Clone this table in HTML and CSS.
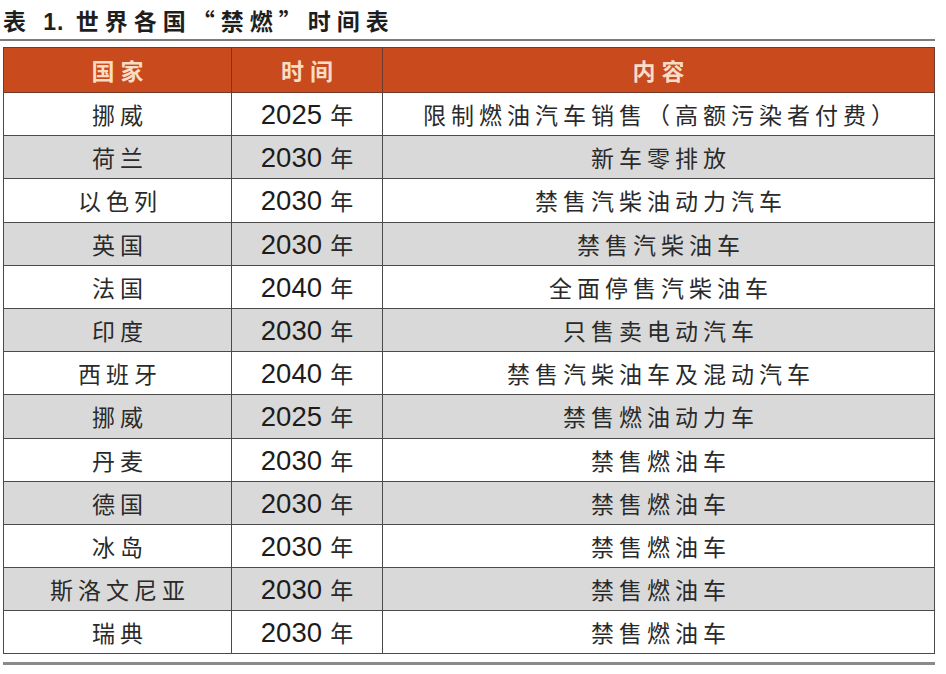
FILE: index.html
```html
<!DOCTYPE html>
<html lang="zh-CN">
<head>
<meta charset="utf-8">
<title>表 1. 世界各国“禁燃”时间表</title>
<link rel="stylesheet" href="styles.css">
</head>
<body>
<div class="page">
  <div class="title">表 <span class="tnum">1.</span> 世界各国“禁燃”时间表</div>
  <table class="ban">
    <colgroup>
      <col class="c1"><col class="c2"><col class="c3">
    </colgroup>
    <thead>
      <tr><th>国家</th><th>时间</th><th>内容</th></tr>
    </thead>
    <tbody>
      <tr><td>挪威</td><td class="yr"><span class="num">2025</span> 年</td><td>限制燃油汽车销售（高额污染者付费）</td></tr>
      <tr><td>荷兰</td><td class="yr"><span class="num">2030</span> 年</td><td>新车零排放</td></tr>
      <tr><td>以色列</td><td class="yr"><span class="num">2030</span> 年</td><td>禁售汽柴油动力汽车</td></tr>
      <tr><td>英国</td><td class="yr"><span class="num">2030</span> 年</td><td>禁售汽柴油车</td></tr>
      <tr><td>法国</td><td class="yr"><span class="num">2040</span> 年</td><td>全面停售汽柴油车</td></tr>
      <tr><td>印度</td><td class="yr"><span class="num">2030</span> 年</td><td>只售卖电动汽车</td></tr>
      <tr><td>西班牙</td><td class="yr"><span class="num">2040</span> 年</td><td>禁售汽柴油车及混动汽车</td></tr>
      <tr><td>挪威</td><td class="yr"><span class="num">2025</span> 年</td><td>禁售燃油动力车</td></tr>
      <tr><td>丹麦</td><td class="yr"><span class="num">2030</span> 年</td><td>禁售燃油车</td></tr>
      <tr><td>德国</td><td class="yr"><span class="num">2030</span> 年</td><td>禁售燃油车</td></tr>
      <tr><td>冰岛</td><td class="yr"><span class="num">2030</span> 年</td><td>禁售燃油车</td></tr>
      <tr><td>斯洛文尼亚</td><td class="yr"><span class="num">2030</span> 年</td><td>禁售燃油车</td></tr>
      <tr><td>瑞典</td><td class="yr"><span class="num">2030</span> 年</td><td>禁售燃油车</td></tr>
    </tbody>
  </table>
  <div class="endrule"></div>
</div>
</body>
</html>
```
FILE: styles.css
```css
html, body {
  margin: 0;
  padding: 0;
  background: #ffffff;
}
.page {
  width: 946px;
  font-family: "Noto Sans CJK SC", "Liberation Sans", sans-serif;
  color: #222222;
}
.title {
  width: 932px;
  height: 33px;
  padding: 6px 0 0 3px;
  box-sizing: content-box;
  font-family: "Noto Sans CJK SC", sans-serif;
  font-weight: 700;
  font-size: 23px;
  line-height: 28px;
  letter-spacing: 6px;
  color: #1e1e1e;
  border-bottom: 2px solid #7c7c7c;
}
.tnum {
  font-family: "Liberation Sans", sans-serif;
  font-size: 23px;
  letter-spacing: 1px;
}
.ban {
  margin: 6px 0 0 3px;
  width: 931px;
  border-collapse: collapse;
  table-layout: fixed;
}
.c1 { width: 228px; }
.c2 { width: 151px; }
.c3 { width: 552px; }
.ban th {
  height: 44px;
  padding: 0 0 0 6px;
  background: #c94a1c;
  color: #f8dcc6;
  font-weight: 700;
  font-size: 23px;
  letter-spacing: 6px;
  border: 1.5px solid #6e3a2c;
  text-align: center;
}
.ban td {
  height: 42.2px;
  padding: 0 0 0 5px;
  border: 1.5px solid #4a4a4a;
  text-align: center;
  font-size: 23px;
  letter-spacing: 5px;
  color: #2a2a2a;
}
.ban tbody tr:nth-child(even) td {
  background: #d9d9d9;
}
.ban td.yr {
  letter-spacing: 0;
  padding: 0;
  font-size: 23px;
}
.num {
  font-family: "Liberation Sans", sans-serif;
  font-size: 27.5px;
  margin-right: 3px;
  color: #1c1c1c;
}
.endrule {
  margin: 8px 0 0 3px;
  width: 932px;
  height: 3px;
  background: #8a8a8a;
}
```
